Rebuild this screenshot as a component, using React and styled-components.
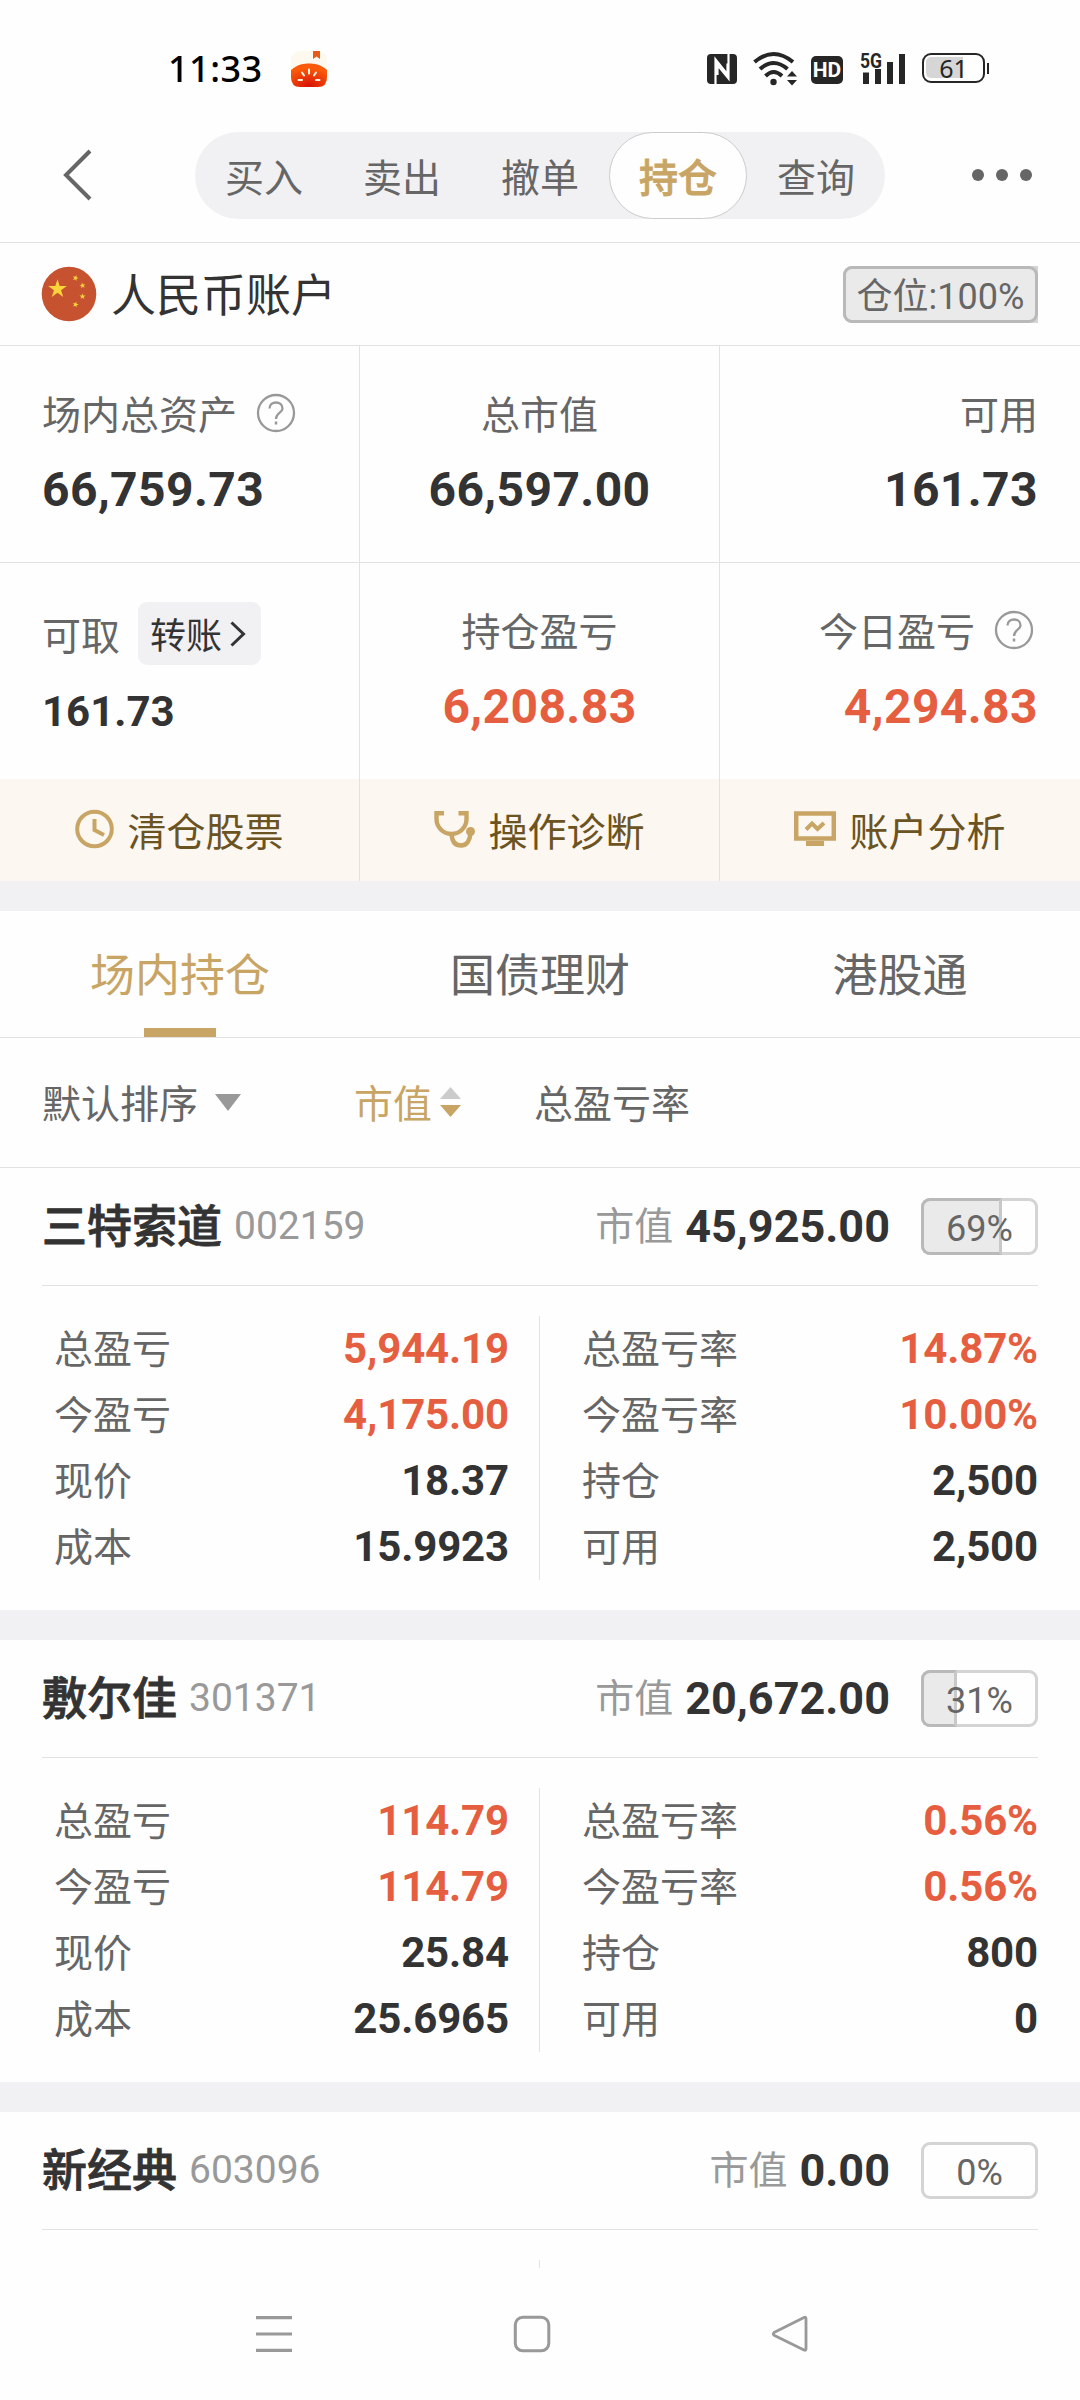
import React from 'react';
import styled, { createGlobalStyle } from 'styled-components';

const actions = ['买入', '卖出', '撤单', '持仓', '查询'];
const markets = ['场内持仓', '国债理财', '港股通'];

const holdings = [
  {
    name: '三特索道', code: '002159', value: '45,925.00', percent: 69,
    left: [['总盈亏', '5,944.19', true], ['今盈亏', '4,175.00', true], ['现价', '18.37'], ['成本', '15.9923']],
    right: [['总盈亏率', '14.87%', true], ['今盈亏率', '10.00%', true], ['持仓', '2,500'], ['可用', '2,500']],
  },
  {
    name: '敷尔佳', code: '301371', value: '20,672.00', percent: 31,
    left: [['总盈亏', '114.79', true], ['今盈亏', '114.79', true], ['现价', '25.84'], ['成本', '25.6965']],
    right: [['总盈亏率', '0.56%', true], ['今盈亏率', '0.56%', true], ['持仓', '800'], ['可用', '0']],
  },
  { name: '新经典', code: '603096', value: '0.00', percent: 0, left: [], right: [] },
];

const star = (cx, cy, r, turn = 0) =>
  Array.from({ length: 10 }, (_, i) => {
    const radius = i % 2 ? r * 0.382 : r;
    const angle = (Math.PI / 5) * i - Math.PI / 2 + turn;
    return `${cx + radius * Math.cos(angle)},${cy + radius * Math.sin(angle)}`;
  }).join(' ');

const TomatoIcon = () => (
  <svg width="38" height="38" viewBox="0 0 38 38">
    <defs>
      <radialGradient id="tomato" cx="0.5" cy="0.95" r="0.75">
        <stop offset="0" stopColor="#d81206" />
        <stop offset="1" stopColor="#fa5a0a" />
      </radialGradient>
    </defs>
    <rect x="1" y="1" width="36" height="36" rx="9" fill="#fdf9ef" />
    <path d="M1 20C8 14 14 13.500 19 13.500S30 14 37 20V27Q37 37 28 37H10Q1 37 1 27Z" fill="url(#tomato)" />
    <path d="M23 1H30V9L26.500 6.500L23 9Z" fill="#e85a18" />
    <path d="M19 19.500V23.500M12 22.500L14 25.500M26 22.500L24 25.500M8.500 30H12M26 30H29.500" stroke="#fdf3e0" strokeWidth="2" strokeLinecap="round" />
  </svg>
);

const NfcIcon = () => (
  <svg width="30" height="30" viewBox="0 0 30 30">
    <rect width="30" height="30" rx="4" fill="#262626" />
    <path d="M8.500 30V5.500L20.500 20.500V9.500M21.500 0V24.500L10.500 11V21" fill="none" stroke="#fff" strokeWidth="2.200" />
  </svg>
);

const WifiIcon = () => (
  <svg width="46" height="35" viewBox="0 0 46 35">
    <g fill="none" stroke="#262626" strokeWidth="4">
      <path d="M1.500 11Q20.500 -5 40 11" />
      <path d="M7 18Q20.500 6 34.500 18" />
      <path d="M12.500 25Q20.500 17 29 25" />
    </g>
    <circle cx="20.500" cy="31" r="3.200" fill="#262626" />
    <path d="M34 25.500L39 20L44 25.500ZM34 29L39 34.500L44 29Z" fill="#262626" />
  </svg>
);

const SignalIcon = () => (
  <svg width="48" height="50" viewBox="0 -6 48 50">
    <path d="M4 22.500H10V34H4ZM16 19H22V34H16ZM28 12H34V34H28ZM40 4H46V34H40Z" fill="#262626" />
    <text x="1" y="17.500" fontSize="20" fontWeight="700" textLength="22" lengthAdjust="spacingAndGlyphs" fill="#262626">5G</text>
  </svg>
);

const BackIcon = () => (
  <svg width="32" height="54" viewBox="0 0 32 54">
    <path d="M29 3L5 27L29 51" fill="none" stroke="#666" strokeWidth="4" />
  </svg>
);

const MoreIcon = () => (
  <svg width="62" height="14" viewBox="0 0 62 14">
    <circle cx="7" cy="7" r="6" fill="#666" />
    <circle cx="31" cy="7" r="6" fill="#666" />
    <circle cx="55" cy="7" r="6" fill="#666" />
  </svg>
);

const FlagIcon = () => (
  <svg width="56" height="56" viewBox="0 0 56 56">
    <circle cx="28" cy="28" r="27.300" fill="#c65230" />
    <g fill="#fbd43c">
      <polygon points={star(16.500, 23, 9.800)} />
      <polygon points={star(34.500, 12, 3.200, 0.3)} />
      <polygon points={star(41.500, 19.500, 3.200, -0.2)} />
      <polygon points={star(41.500, 30.500, 3.200)} />
      <polygon points={star(34.500, 38.500, 3.200, 0.3)} />
    </g>
  </svg>
);

const HelpIcon = () => (
  <svg width="40" height="40" viewBox="0 0 40 40" fill="none" stroke="#999" strokeWidth="2.300">
    <circle cx="20" cy="20" r="18" />
    <path d="M13.500 15.500C13.500 7.500 26.500 7.500 26.500 15.500C26.500 20 20 19.500 20 26" />
    <path d="M20 28.500V31.500" strokeWidth="2.500" />
  </svg>
);

const ClockIcon = () => (
  <svg width="39" height="40" viewBox="0 0 39 40" fill="none" stroke="#c8a565" strokeWidth="4">
    <circle cx="19.500" cy="20" r="17.300" />
    <path d="M19.500 10V21L29 26" />
  </svg>
);

const StethoscopeIcon = () => (
  <svg width="41" height="38" viewBox="0 0 41 38" fill="none" stroke="#c8a565" strokeWidth="4.400">
    <path d="M10 3.200H2.500V9C2.500 17 9 24 17.500 24S32.500 17 32.500 9V3.200H24.500" />
    <path d="M17.500 24C18 31 21 35.500 27 35.500S36 30 36.500 23" />
    <circle cx="36.500" cy="21.500" r="4.500" fill="#c8a565" stroke="none" />
  </svg>
);

const MonitorIcon = () => (
  <svg width="42" height="36" viewBox="0 0 42 36" fill="none" stroke="#c8a565">
    <path d="M2.200 2.500H39.800V27.500H2.200Z" strokeWidth="4.500" />
    <path d="M12 32.500H30" strokeWidth="5" />
    <path d="M12 18.500L18 12.500L23.500 18L30 12" strokeWidth="4" />
  </svg>
);

const PercentBadge = ({ percent, label, wide }) => (
  <Badge $wide={wide}>
    {percent > 0 && (
      <BadgeFill $full={percent === 100} style={{ width: `${percent}%` }} />
    )}
    <BadgeText>{label || `${percent}%`}</BadgeText>
  </Badge>
);

const DetailColumn = ({ rows, side }) => (
  <Column $side={side}>
    {rows.map(([label, value, up]) => (
      <DetailRow key={label}>
        <Label>{label}</Label>
        <DetailValue $up={up}>{value}</DetailValue>
      </DetailRow>
    ))}
  </Column>
);

const Holding = ({ data }) => (
  <Card>
    <CardHeader>
      <StockName>{data.name}</StockName>
      <StockCode>{data.code}</StockCode>
      <MarketLabel>市值</MarketLabel>
      <MarketValue>{data.value}</MarketValue>
      <PercentBadge percent={data.percent} />
    </CardHeader>
    <CardBody>
      <DetailColumn rows={data.left} side="left" />
      <DetailColumn rows={data.right} side="right" />
    </CardBody>
  </Card>
);

const App = () => {
  return (
    <>
      <GlobalStyle />
      <Screen>
        <Scroll>
          <StatusBar>
            <Time>11:33</Time>
            <TomatoIcon />
            <StatusIcons>
              <NfcIcon />
              <WifiIcon />
              <HdMark>HD</HdMark>
              <SignalIcon />
              <Battery><BatteryLevel />61</Battery>
              <BatteryTip />
            </StatusIcons>
          </StatusBar>

          <NavBar>
            <BackIcon />
            <Segments>
              {actions.map((item) => (
                <Segment key={item} $active={item === '持仓'}>{item}</Segment>
              ))}
            </Segments>
            <MoreIcon />
          </NavBar>

          <AccountBar>
            <FlagIcon />
            <AccountName>人民币账户</AccountName>
            <PercentBadge percent={100} label="仓位:100%" wide />
          </AccountBar>

          <Summary>
            <Cell>
              <CellLabel>场内总资产<HelpIcon /></CellLabel>
              <Amount>66,759.73</Amount>
            </Cell>
            <Cell $align="center">
              <CellLabel>总市值</CellLabel>
              <Amount>66,597.00</Amount>
            </Cell>
            <Cell $align="flex-end">
              <CellLabel>可用</CellLabel>
              <Amount>161.73</Amount>
            </Cell>
            <Cell $last>
              <CellLabel $tall>
                可取
                <Transfer>
                  转账
                  <svg width="16" height="28" viewBox="0 0 16 28">
                    <path d="M1.500 2.500L13.500 14L1.500 25.500" fill="none" stroke="#333" strokeWidth="3" />
                  </svg>
                </Transfer>
              </CellLabel>
              <Amount $small>161.73</Amount>
            </Cell>
            <Cell $align="center" $last>
              <CellLabel>持仓盈亏</CellLabel>
              <Amount $up>6,208.83</Amount>
            </Cell>
            <Cell $align="flex-end" $last>
              <CellLabel $inset>今日盈亏<HelpIcon /></CellLabel>
              <Amount $up>4,294.83</Amount>
            </Cell>
          </Summary>

          <Tools>
            <Tool><ClockIcon /><span>清仓股票</span></Tool>
            <Tool><StethoscopeIcon /><span>操作诊断</span></Tool>
            <Tool><MonitorIcon /><span>账户分析</span></Tool>
          </Tools>

          <Gap />

          <Tabs>
            {markets.map((item, index) => (
              <Tab key={item} $active={index === 0}>{item}</Tab>
            ))}
          </Tabs>

          <SortBar>
            <DefaultSort>
              默认排序
              <svg width="26" height="17" viewBox="0 0 26 17"><path d="M0 0H26L13 17Z" fill="#999" /></svg>
            </DefaultSort>
            <ValueSort>
              市值
              <svg width="21" height="30" viewBox="0 0 21 30">
                <path d="M0 12L10.500 0L21 12Z" fill="#ccc" />
                <path d="M0 18L10.500 30L21 18Z" fill="#c8a565" />
              </svg>
            </ValueSort>
            <span>总盈亏率</span>
          </SortBar>

          {holdings.map((item) => (
            <Holding key={item.code} data={item} />
          ))}
        </Scroll>

        <SystemNav>
          <svg width="38" height="38" viewBox="0 0 38 38" stroke="#999" strokeWidth="3.200">
            <path d="M1 2.600H37M1 19H37M1 35.400H37" />
          </svg>
          <svg width="38" height="38" viewBox="0 0 38 38" fill="none" stroke="#999" strokeWidth="3">
            <rect x="2.300" y="2.300" width="33.500" height="33.500" rx="7.500" />
          </svg>
          <svg width="38" height="38" viewBox="0 0 38 38" fill="none" stroke="#999" strokeWidth="2.800" strokeLinejoin="round">
            <path d="M33 2.500Q35 1.500 35 4V33.500Q35 36 33 35L3.500 20.500Q1 19 3.500 17.200Z" />
          </svg>
        </SystemNav>
      </Screen>
    </>
  );
};

export default App;

const GlobalStyle = createGlobalStyle`
  *,
  *::before,
  *::after {
    box-sizing: border-box;
  }

  body {
    margin: 0;
    background: #fefefe;
    font-family: Roboto, "Noto Sans CJK SC", sans-serif;
    line-height: 1.3;
    color: #666;
  }

  svg {
    display: block;
    flex-shrink: 0;
  }
`;

const Screen = styled.div`
  display: flex;
  flex-direction: column;
  width: 1080px;
  height: 2400px;
  overflow: hidden;
  background: #fefefe;
`;

const Scroll = styled.div`
  height: 2268px;
  overflow: hidden;
`;

const StatusBar = styled.div`
  display: flex;
  align-items: center;
  height: 132px;
  padding: 6px 91px 0 168px;
`;

const Time = styled.span`
  width: 122px;
  font: 500 36px/48px "Noto Sans", sans-serif;
  letter-spacing: 0.5px;
  color: #000;
`;

const StatusIcons = styled.div`
  display: flex;
  align-items: center;
  margin-left: auto;
  color: #262626;

  svg + svg {
    margin: -2px 0 0 16px;
  }
`;

const HdMark = styled.span`
  width: 32px;
  height: 28px;
  margin: 1px 16px 0 12px;
  border-radius: 5px;
  background: #262626;
  color: #fff;
  font-size: 21px;
  font-weight: 700;
  line-height: 29px;
  text-align: center;
`;

const Battery = styled.div`
  position: relative;
  z-index: 0;
  width: 63px;
  height: 30px;
  margin: -2px 0 0 15px;
  border: 2.5px solid #262626;
  border-radius: 9px;
  font: 400 25px/27px "Noto Sans", sans-serif;
  text-align: center;
`;

const BatteryLevel = styled.div`
  position: absolute;
  z-index: -1;
  top: 2px;
  left: 2px;
  width: 37px;
  height: 21px;
  border-radius: 5px 0 0 5px;
  background: #d6d6d6;
`;

const BatteryTip = styled.div`
  width: 2px;
  height: 11px;
  margin: -2px 0 0 2px;
  background: #262626;
`;

const NavBar = styled.div`
  display: flex;
  align-items: flex-start;
  height: 111px;
  padding: 0 47px 0 61px;
  border-bottom: 1px solid #e2e2e2;

  > svg {
    align-self: center;
    margin-bottom: 24px;
  }
`;

const Segments = styled.div`
  display: flex;
  width: 690px;
  height: 87px;
  margin: 0 auto 0 102px;
  border-radius: 44px;
  background: #f1f1f4;
`;

const Segment = styled.div`
  flex: 1;
  padding-top: 4px;
  border: 1px solid ${({ $active }) => ($active ? '#ccc' : 'transparent')};
  border-radius: 44px;
  background: ${({ $active }) => ($active ? '#fefefe' : 'transparent')};
  color: ${({ $active }) => ($active ? '#c8a565' : '#666')};
  font-size: 39px;
  font-weight: ${({ $active }) => ($active ? 500 : 400)};
  -webkit-text-stroke: ${({ $active }) => ($active ? '0.8px' : '0')};
  line-height: 85px;
  text-align: center;
`;

const AccountBar = styled.div`
  display: flex;
  align-items: center;
  height: 103px;
  padding: 0 42px 0 41px;
  border-bottom: 1px solid #e2e2e2;
`;

const AccountName = styled.h1`
  margin: 6px auto 0 14px;
  color: #333;
  font-size: 45px;
  font-weight: 400;
  line-height: 60px;
`;

const Badge = styled.div`
  position: relative;
  width: ${({ $wide }) => ($wide ? 195 : 117)}px;
  height: 57px;
  border-radius: 9px;
  box-shadow: inset 0 0 0 3px #d4d4d4;
`;

const BadgeFill = styled.div`
  position: absolute;
  top: 0;
  left: 0;
  height: 57px;
  border-radius: 9px 0 0 9px;
  background: #d4d4d4;

  &::after {
    content: "";
    display: block;
    height: 57px;
    border: 3px solid #b9b9b9;
    border-right-color: ${({ $full }) => ($full ? '#b9b9b9' : '#c8c8c8')};
    border-radius: ${({ $full }) => ($full ? '9px' : '9px 0 0 9px')};
    background: #eaeaea;
  }
`;

const BadgeText = styled.div`
  position: relative;
  padding-top: 3px;
  color: #666;
  font-size: 36px;
  line-height: 57px;
  text-align: center;
`;

const Summary = styled.div`
  display: grid;
  grid-template-columns: 360px 360px 360px;
  grid-template-rows: 217px 216px;
`;

const Cell = styled.div`
  display: flex;
  flex-direction: column;
  align-items: ${({ $align }) => $align || 'flex-start'};
  padding: 42px 42px 0;
  border-bottom: ${({ $last }) => ($last ? 0 : 1)}px solid #e2e2e2;
  border-right: 1px solid #e2e2e2;

  &:nth-child(3n) {
    border-right: 0;
  }
`;

const CellLabel = styled.div`
  display: flex;
  align-items: center;
  height: ${({ $tall }) => ($tall ? 64 : 56)}px;
  margin-right: ${({ $inset }) => ($inset ? 4 : 0)}px;
  font-size: 39px;
  line-height: 56px;
  white-space: nowrap;

  > svg {
    margin: -6px 0 0 19px;
  }
`;

const Amount = styled.div`
  margin-top: ${({ $small }) => ($small ? 14 : 17)}px;
  color: ${({ $up }) => ($up ? '#e65e40' : '#333')};
  font-size: ${({ $small }) => ($small ? 42 : 48)}px;
  font-weight: 700;
  letter-spacing: ${({ $small }) => ($small ? 0 : 0.4)}px;
  line-height: 58px;
`;

const Transfer = styled.button`
  display: flex;
  align-items: center;
  width: 123px;
  height: 63px;
  margin: -8px 0 0 18px;
  padding: 7px 0 0 12px;
  border: 0;
  border-radius: 9px;
  background: #f1f1f4;
  color: #333;
  font: inherit;
  font-size: 36px;

  svg {
    margin: -6px 0 0 8px;
  }
`;

const Tools = styled.div`
  display: grid;
  grid-template-columns: 360px 360px 360px;
  height: 102px;
  background: #fcf7f0;
`;

const Tool = styled.div`
  display: flex;
  align-items: center;
  justify-content: center;
  gap: 13px;
  padding-bottom: 2px;
  border-right: 1px solid #e2e2e2;
  color: #6b5322;
  font-size: 39px;

  &:last-child {
    border-right: 0;
  }

  span {
    margin-top: 8px;
  }
`;

const Gap = styled.div`
  height: 30px;
  background: #f1f1f4;
`;

const Tabs = styled.div`
  display: flex;
  height: 127px;
  border-bottom: 1px solid #e2e2e2;
`;

const Tab = styled.div`
  display: flex;
  flex: 1;
  flex-direction: column;
  align-items: center;
  justify-content: space-between;
  padding-top: 36px;
  color: ${({ $active }) => ($active ? '#c8a565' : '#666')};
  font-size: 45px;
  line-height: 60px;

  &::after {
    content: "";
    width: 72px;
    height: 9px;
    background: ${({ $active }) => ($active ? '#c8a565' : 'transparent')};
  }
`;

const SortBar = styled.div`
  display: flex;
  align-items: center;
  height: 130px;
  padding: 6px 42px 0;
  border-bottom: 1px solid #e2e2e2;
  font-size: 39px;
`;

const DefaultSort = styled.div`
  display: flex;
  align-items: center;
  width: 312px;

  svg {
    margin: -7px 0 0 17px;
  }
`;

const ValueSort = styled.div`
  display: flex;
  align-items: center;
  width: 180px;
  color: #c8a565;

  svg {
    margin: -7px 0 0 8px;
  }
`;

const Card = styled.section`
  border-bottom: 30px solid #f1f1f4;
`;

const CardHeader = styled.div`
  display: flex;
  align-items: center;
  height: 118px;
  margin: 0 42px;
  border-bottom: 1px solid #e2e2e2;
`;

const StockName = styled.h2`
  margin: 4px 12px 0 0;
  color: #333;
  font-size: 45px;
  font-weight: 500;
  -webkit-text-stroke: 0.8px;
`;

const StockCode = styled.span`
  margin-top: -1px;
  color: #999;
  font-size: 39px;
`;

const MarketLabel = styled.span`
  margin: 1px 12px 0 auto;
  color: #999;
  font-size: 39px;
`;

const MarketValue = styled.span`
  margin: 2px 31px 0 0;
  color: #333;
  font-size: 45px;
  font-weight: 700;
`;

const CardBody = styled.div`
  display: flex;
  padding: 30px 0;
`;

const Column = styled.div`
  width: 540px;
  height: 264px;
  padding: ${({ $side }) => ($side === 'left' ? '0 30px 0 54px' : '0 42px')};
  border-right: ${({ $side }) => ($side === 'left' ? '1px solid #e2e2e2' : '0')};
`;

const DetailRow = styled.div`
  display: flex;
  align-items: center;
  justify-content: space-between;
  height: 66px;
  font-size: 39px;
`;

const Label = styled.span`
  margin-top: 2px;
`;

const DetailValue = styled.span`
  margin-top: 1px;
  color: ${({ $up }) => ($up ? '#e65e40' : '#333')};
  font-size: 42px;
  font-weight: 700;
  letter-spacing: -0.15px;
`;

const SystemNav = styled.div`
  display: flex;
  align-items: center;
  justify-content: space-between;
  height: 132px;
  padding: 0 271px 0 255px;
`;
